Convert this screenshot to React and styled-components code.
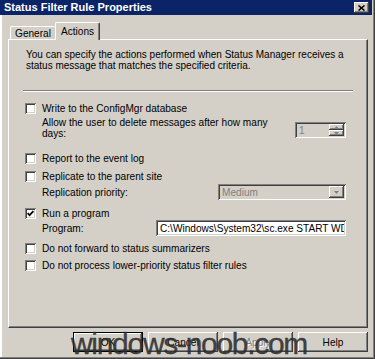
import React from 'react';
import styled, { createGlobalStyle } from 'styled-components';

const GlobalStyle = createGlobalStyle`
  html, body {
    margin: 0;
    padding: 0;
    background: #d4d0c8;
  }
  body {
    width: 375px;
    height: 359px;
    overflow: hidden;
    font-family: "Liberation Sans", Arial, sans-serif;
  }
`;

const raised = `
  box-shadow: inset -1px -1px 0 #404040, inset 1px 1px 0 #ffffff,
    inset -2px -2px 0 #808080, inset 2px 2px 0 #d4d0c8;
`;

const sunken = `
  box-shadow: inset 1px 1px 0 #808080, inset -1px -1px 0 #ffffff,
    inset 2px 2px 0 #404040, inset -2px -2px 0 #d4d0c8;
`;

const Window = styled.div`
  position: relative;
  box-sizing: border-box;
  width: 375px;
  height: 359px;
  padding: 0 2px 3px 2px;
  display: flex;
  flex-direction: column;
  background: #d4d0c8;
  box-shadow: inset -1px -1px 0 #404040, inset -2px -2px 0 #808080,
    inset 2px 0 0 #ffffff;
  font-size: 10.1px;
  color: #000;
  overflow: hidden;
`;

const TitleBar = styled.div`
  height: 15px;
  margin: 0 1px 0 -2px;
  padding-left: 4px;
  display: flex;
  align-items: center;
  justify-content: space-between;
  background: #0b2467;
  color: #fff;
  font-size: 11px;
  font-weight: bold;
  line-height: 15px;
`;

const CloseButton = styled.div`
  box-sizing: border-box;
  width: 15px;
  height: 11px;
  margin-right: 3px;
  display: flex;
  align-items: center;
  justify-content: center;
  background: #d4d0c8;
  ${raised}
`;

const Body = styled.div`
  padding: 7px 0 0 6px;
`;

const TabStrip = styled.div`
  position: relative;
  z-index: 1;
  height: 17px;
  padding-left: 2px;
  display: flex;
  align-items: flex-end;
`;

const Tab = styled.div`
  box-sizing: border-box;
  width: 45px;
  height: ${p => (p.$active ? '18px' : '13px')};
  margin-bottom: ${p => (p.$active ? '-1px' : '0')};
  display: flex;
  align-items: center;
  justify-content: center;
  background: #d4d0c8;
  border-top: 1px solid #fff;
  border-left: 1px solid #fff;
  border-right: ${p => (p.$active ? '1px solid #404040' : 'none')};
  border-radius: 2px 2px 0 0;
  box-shadow: ${p => (p.$active ? 'inset -1px 0 0 #808080' : 'none')};
  line-height: 11px;
  padding-top: ${p => (p.$active ? '0' : '1px')};
`;

const Panel = styled.div`
  box-sizing: border-box;
  width: 360px;
  height: 289px;
  padding: 0 21px 0 16px;
  border-top: 1px solid #fff;
  border-left: 1px solid #fff;
  border-right: 1px solid #404040;
  border-bottom: 1px solid #404040;
  box-shadow: inset -1px -1px 0 #808080;
  display: flex;
  flex-direction: column;
`;

const Intro = styled.p`
  margin: 10px -6px 0 1px;
  font-size: 10px;
  line-height: 10.5px;
  white-space: nowrap;
`;

const Separator = styled.div`
  height: 2px;
  margin: 19px -7px 0 -2px;
  border-top: 1px solid #808080;
  border-bottom: 1px solid #fff;
  box-sizing: border-box;
`;

const CheckRow = styled.label`
  height: 11px;
  margin-top: ${p => p.$mt}px;
  display: flex;
  align-items: center;
  gap: 6px;
  line-height: 11px;
  white-space: nowrap;
`;

const Box = styled.span`
  box-sizing: border-box;
  flex: none;
  width: 11px;
  height: 11px;
  display: flex;
  align-items: center;
  justify-content: center;
  background: #fff;
  ${sunken}
`;

const SubRow = styled.div`
  height: ${p => p.$h}px;
  margin-top: ${p => p.$mt}px;
  padding-left: 17px;
  display: flex;
  align-items: ${p => (p.$top ? 'flex-start' : 'center')};
  justify-content: space-between;
  line-height: ${p => (p.$top ? '10.5px' : '11px')};
  white-space: nowrap;
`;

const Field = styled.div`
  box-sizing: border-box;
  flex: none;
  width: ${p => p.$w}px;
  height: ${p => p.$h || 16}px;
  margin-top: ${p => p.$mt || 0}px;
  padding: 2px;
  display: flex;
  align-items: center;
  background: ${p => (p.$disabled ? '#d4d0c8' : '#fff')};
  color: ${p => (p.$disabled ? '#808080' : '#000')};
  ${sunken}
  overflow: hidden;
`;

const FieldText = styled.span`
  flex: 1;
  min-width: 0;
  padding-left: 2px;
  overflow: hidden;
  white-space: nowrap;
  line-height: 11px;
`;

const Spinner = styled.div`
  flex: none;
  width: 15px;
  height: 12px;
  display: flex;
  flex-direction: column;
`;

const SpinHalf = styled.div`
  box-sizing: border-box;
  flex: 1;
  display: flex;
  align-items: center;
  justify-content: center;
  background: #d4d0c8;
  ${raised}
`;

const DropButton = styled.div`
  box-sizing: border-box;
  flex: none;
  width: 15px;
  height: 12px;
  display: flex;
  align-items: center;
  justify-content: center;
  background: #d4d0c8;
  ${raised}
`;

const ButtonRow = styled.div`
  width: 360px;
  margin-top: 4px;
  display: flex;
  justify-content: flex-end;
  gap: 5px;
`;

const Button = styled.div`
  box-sizing: border-box;
  width: 70px;
  height: 20px;
  display: flex;
  align-items: center;
  justify-content: center;
  background: #d4d0c8;
  color: ${p => (p.$disabled ? '#808080' : '#000')};
  text-shadow: ${p => (p.$disabled ? '1px 1px 0 #fff' : 'none')};
  border: ${p => (p.$default ? '1px solid #000' : 'none')};
  ${raised}
`;

const Watermark = styled.div`
  position: absolute;
  left: 71px;
  top: 330px;
  font-family: "Liberation Sans", Arial, sans-serif;
  font-size: 30px;
  line-height: 27px;
  letter-spacing: -1.3px;
  color: rgba(45, 45, 45, 0.88);
  -webkit-text-stroke: 0.4px rgba(45, 45, 45, 0.88);
  white-space: nowrap;
  pointer-events: none;
`;

const Check = () => (
  <svg width="7" height="7" viewBox="0 0 7 7">
    <path d="M0.6 3.2 L2.6 5.2 L6.4 1.2" fill="none" stroke="#000" strokeWidth="1.7" />
  </svg>
);

const Arrow = ({ up }) => (
  <svg width="5" height="3" viewBox="0 0 5 3">
    <path d={up ? 'M0 3 L5 3 L2.5 0 Z' : 'M0 0 L5 0 L2.5 3 Z'} fill="#808080" />
  </svg>
);

const CheckItem = ({ mt, checked, children }) => (
  <CheckRow $mt={mt}>
    <Box>{checked && <Check />}</Box>
    <span>{children}</span>
  </CheckRow>
);

export default function App() {
  return (
    <>
      <GlobalStyle />
      <Window>
        <TitleBar>
          <span>Status Filter Rule Properties</span>
          <CloseButton>
            <svg width="7" height="6" viewBox="0 0 7 6">
              <path d="M0.5 0.5 L6.5 5.5 M6.5 0.5 L0.5 5.5" stroke="#000" strokeWidth="1.6" />
            </svg>
          </CloseButton>
        </TitleBar>
        <Body>
          <TabStrip>
            <Tab>General</Tab>
            <Tab $active>Actions</Tab>
          </TabStrip>
          <Panel>
            <Intro>
              You can specify the actions performed when Status Manager receives a
              <br />
              status message that matches the specified criteria.
            </Intro>
            <Separator />
            <CheckItem mt={11}>Write to the ConfigMgr database</CheckItem>
            <SubRow $h={21} $mt={4} $top>
              <span>
                Allow the user to delete messages after how many
                <br />
                days:
              </span>
              <Field $w={51} $mt={4} $disabled>
                <FieldText>1</FieldText>
                <Spinner>
                  <SpinHalf><Arrow up /></SpinHalf>
                  <SpinHalf><Arrow /></SpinHalf>
                </Spinner>
              </Field>
            </SubRow>
            <CheckItem mt={14}>Report to the event log</CheckItem>
            <CheckItem mt={7}>Replicate to the parent site</CheckItem>
            <SubRow $h={16} $mt={2}>
              <span>Replication priority:</span>
              <Field $w={128} $disabled>
                <FieldText>Medium</FieldText>
                <DropButton><Arrow /></DropButton>
              </Field>
            </SubRow>
            <CheckItem mt={8} checked>Run a program</CheckItem>
            <SubRow $h={16} $mt={1}>
              <span>Program:</span>
              <Field $w={190}>
                <FieldText>C:\Windows\System32\sc.exe START WD</FieldText>
              </Field>
            </SubRow>
            <CheckItem mt={7}>Do not forward to status summarizers</CheckItem>
            <CheckItem mt={6}>Do not process lower-priority status filter rules</CheckItem>
          </Panel>
          <ButtonRow>
            <Button $default>OK</Button>
            <Button>Cancel</Button>
            <Button $disabled>Apply</Button>
            <Button>Help</Button>
          </ButtonRow>
        </Body>
        <Watermark>windows-noob.com</Watermark>
      </Window>
    </>
  );
}
